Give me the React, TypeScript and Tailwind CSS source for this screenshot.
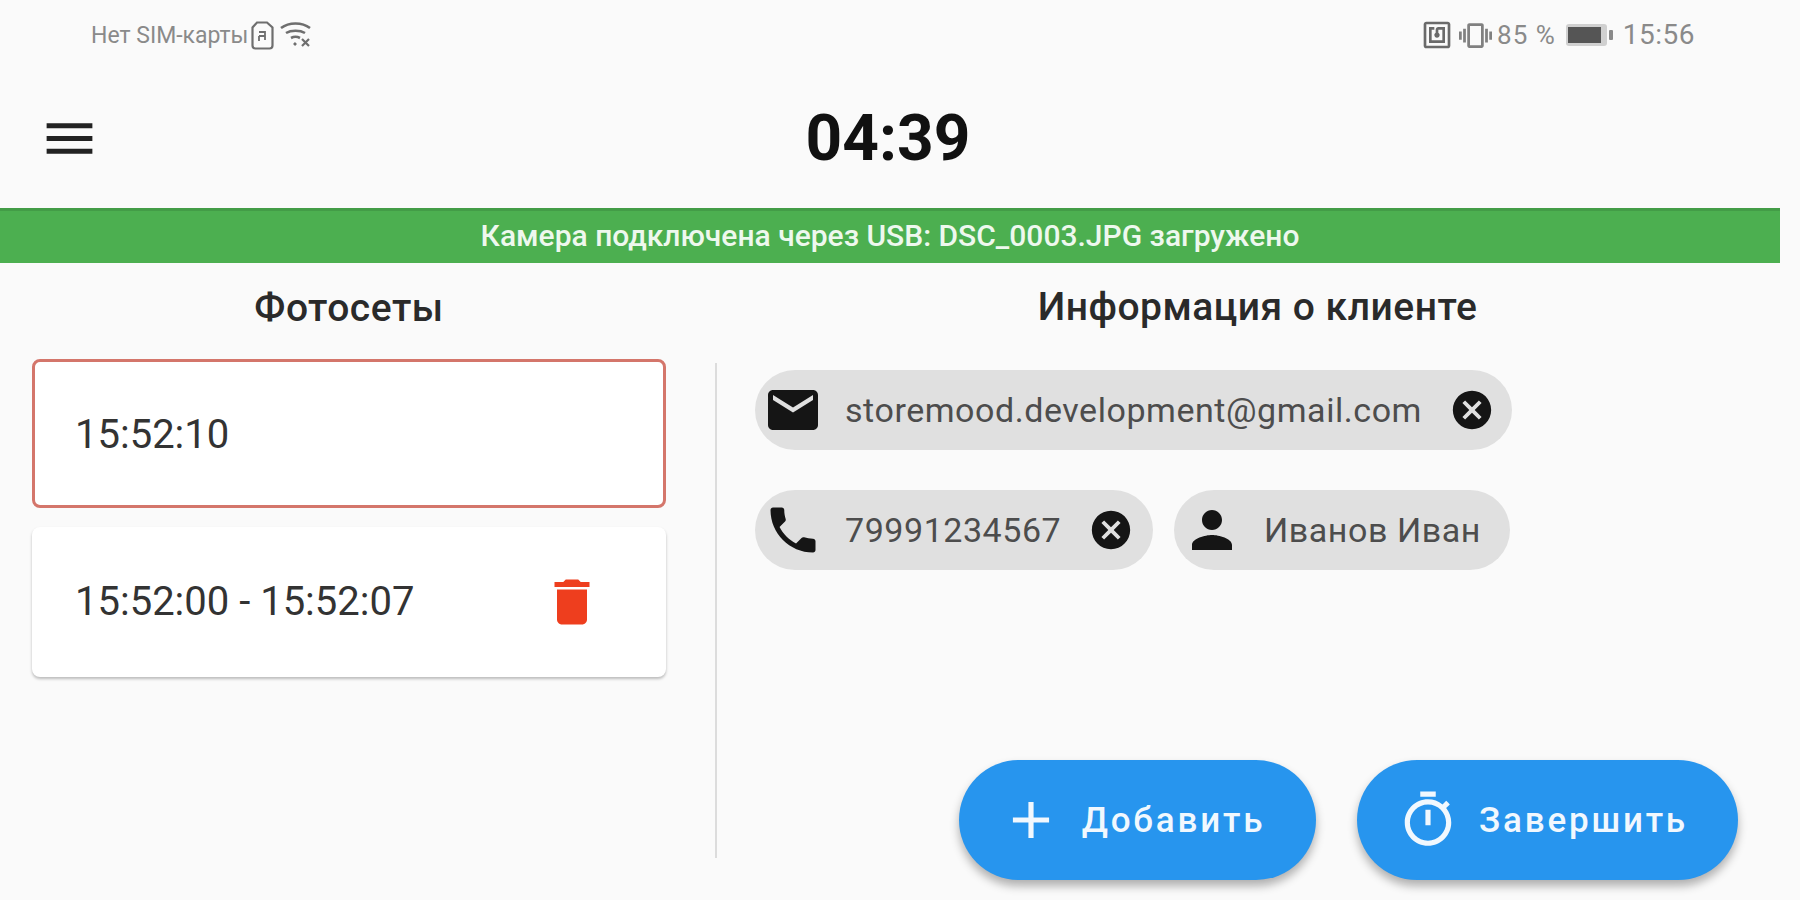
import React from "react";

const font = { fontFamily: "Roboto, 'Noto Sans', sans-serif" };

function Icon({ d, className }: { d: string; className: string }) {
  return (
    <svg viewBox="0 0 24 24" fill="currentColor" className={className}>
      <path d={d} />
    </svg>
  );
}

const icons = {
  menu: "M3 18h18v-2H3v2zm0-5h18v-2H3v2zm0-7v2h18V6H3z",
  email: "M20 4H4c-1.1 0-1.99.9-1.99 2L2 18c0 1.1.9 2 2 2h16c1.1 0 2-.9 2-2V6c0-1.1-.9-2-2-2zm0 4l-8 5-8-5V6l8 5 8-5v2z",
  phone: "M6.62 10.79c1.44 2.83 3.76 5.14 6.59 6.59l2.2-2.2c.27-.27.67-.36 1.02-.24 1.12.37 2.33.57 3.57.57.55 0 1 .45 1 1V20c0 .55-.45 1-1 1-9.39 0-17-7.61-17-17 0-.55.45-1 1-1h3.5c.55 0 1 .45 1 1 0 1.25.2 2.45.57 3.57.11.35.03.74-.25 1.02l-2.2 2.2z",
  person: "M12 12c2.21 0 4-1.79 4-4s-1.79-4-4-4-4 1.79-4 4 1.79 4 4 4zm0 2c-2.67 0-8 1.34-8 4v2h16v-2c0-2.66-5.33-4-8-4z",
  cancel: "M12 2C6.47 2 2 6.47 2 12s4.47 10 10 10 10-4.47 10-10S17.53 2 12 2zm5 13.59L15.59 17 12 13.41 8.41 17 7 15.59 10.59 12 7 8.41 8.41 7 12 10.59 15.59 7 17 8.41 13.41 12 17 15.59z",
  trash: "M6 19c0 1.1.9 2 2 2h8c1.1 0 2-.9 2-2V7H6v12zM19 4h-3.5l-1-1h-5l-1 1H5v2h14V4z",
  add: "M19 13h-6v6h-2v-6H5v-2h6V5h2v6h6v2z",
  timer: "M15 1H9v2h6V1zm-4 13h2V8h-2v6zm8.03-6.61l1.42-1.42c-.43-.51-.9-.99-1.41-1.41l-1.42 1.42C16.07 4.74 14.12 4 12 4c-4.97 0-9 4.03-9 9s4.02 9 9 9 9-4.03 9-9c0-2.12-.74-4.07-1.97-5.61zM12 20c-3.87 0-7-3.13-7-7s3.13-7 7-7 7 3.13 7 7-3.13 7-7 7z",
  nfc: "M20 2H4c-1.1 0-2 .9-2 2v16c0 1.1.9 2 2 2h16c1.1 0 2-.9 2-2V4c0-1.1-.9-2-2-2zm0 18H4V4h16v16zM18 6h-5c-1.1 0-2 .9-2 2v2.28c-.6.35-1 .98-1 1.72 0 1.1.9 2 2 2s2-.9 2-2c0-.74-.4-1.38-1-1.72V8h3v8H8V8h2V6H6v12h12V6z",
  vibrate: "M0 15h2V9H0v6zm3 2h2V7H3v10zm19-8v6h2V9h-2zm-3 8h2V7h-2v10zM16.5 3h-9C6.67 3 6 3.67 6 4.5v15c0 .83.67 1.5 1.5 1.5h9c.83 0 1.5-.67 1.5-1.5v-15c0-.83-.67-1.5-1.5-1.5zM16 19H8V5h8v14z",
};

function StatusBar() {
  return (
    <div className="h-[70px] flex items-center justify-between pl-[91px] pr-[105px] text-[#8a8a8a]">
      <div className="flex items-center">
        <span className="text-[23px] leading-none">Нет SIM-карты</span>
        <svg viewBox="0 0 23 29" fill="none" stroke="currentColor" strokeWidth="2.2" className="w-[23px] h-[29px] ml-[3px] text-[#6e6e6e]">
          <path d="M6 1.5h10l5.500 5v18a3 3 0 0 1-3 3h-14a3 3 0 0 1-3-3v-18z" />
          <path d="M8 11h6v8M8 15h6M8 15v5" strokeWidth="1.8" />
        </svg>
        <svg viewBox="0 0 31 26" fill="none" stroke="currentColor" strokeWidth="2.6" className="w-[31px] h-[26px] ml-[6px] text-[#6e6e6e]">
          <path d="M1 6c8-6 21-6 29 0" />
          <path d="M6 11c5-3 14-3 19 0" />
          <path d="M11 16c3-1.600 6-1.600 9 0" />
          <path d="M14 21l2 2" />
          <path d="M22 17l7 7M29 17l-7 7" strokeWidth="2.200" />
        </svg>
      </div>
      <div className="flex items-center">
        <Icon d={icons.nfc} className="w-[32px] h-[32px] text-[#6a6a6a]" />
        <Icon d={icons.vibrate} className="w-[33px] h-[33px] ml-[6px] text-[#808080]" />
        <span className="text-[26px] leading-none ml-[5px] tracking-[1px]">85 %</span>
        <svg viewBox="0 0 47 22" className="w-[47px] h-[22px] ml-[10px]">
          <rect x="0" y="0" width="41" height="22" rx="3" fill="#d0d0d0" />
          <rect x="2" y="3" width="33" height="16" fill="#555555" />
          <rect x="43" y="6" width="4" height="10" rx="1" fill="#8a8a8a" />
        </svg>
        <span className="text-[28px] leading-none ml-[10px] tracking-[0.5px]">15:56</span>
      </div>
    </div>
  );
}

function Chip({ icon, text, close, className }: { icon: string; text: string; close?: boolean; className?: string }) {
  return (
    <div className={`h-[80px] rounded-full bg-[#e0e0e0] flex items-center ${className ?? ""}`}>
      <Icon d={icon} className="w-[60px] h-[60px] ml-[8px] text-[#151515] shrink-0" />
      <span className="ml-[22px] text-[34px] leading-none text-[#4d4d4d] tracking-[0.55px] whitespace-nowrap">{text}</span>
      {close && <Icon d={icons.cancel} className="w-[46px] h-[46px] ml-[27px] text-[#151515] shrink-0" />}
    </div>
  );
}

function Fab({ icon, label, className }: { icon: string; label: string; className: string }) {
  return (
    <div className={`h-[120px] rounded-full bg-[#2795ee] text-[#f1f8fe] flex items-center justify-center pr-[10px] shadow-[0_6px_10px_rgba(0,0,0,0.3)] ${className}`}>
      <Icon d={icon} className="w-[62px] h-[62px] shrink-0" />
      <span className="ml-[20px] text-[35px] font-medium leading-none tracking-[2.8px]">{label}</span>
    </div>
  );
}

export default function App() {
  return (
    <div style={font} className="w-[1800px] h-[900px] bg-[#fafafa] flex flex-col overflow-hidden">
      <StatusBar />

      <div className="h-[138px] relative flex items-center justify-center pr-[24px]">
        <Icon d={icons.menu} className="absolute left-[39px] top-[38px] w-[61px] h-[61px] text-[#222222]" />
        <span className="text-[64px] font-bold leading-none text-[#111111]">04:39</span>
      </div>

      <div className="w-[1780px] h-[55px] bg-[#4caf50] border-t-[3px] border-[#439c47] flex items-center justify-center pb-[3px] text-[30px] font-medium text-[#eef8ee]">
        Камера подключена через USB: DSC_0003.JPG загружено
      </div>

      <div className="flex-1 flex">
        <div className="w-[715px] shrink-0 pl-[32px] pr-[49px]">
          <h2 className="h-[90px] mb-[6px] flex items-center justify-center text-[39px] font-medium text-[#2a2a2a] tracking-[0.5px]">Фотосеты</h2>
          <div className="h-[149px] rounded-[8px] bg-white border-[3px] border-[#d4766b] flex items-center pl-[40px] pt-[2px] text-[40px] text-[#333333]">
            15:52:10
          </div>
          <div className="mt-[19px] h-[150px] rounded-[8px] bg-white shadow-[0_2px_3px_rgba(0,0,0,0.25)] flex items-center justify-between pl-[43px] pr-[64px] text-[40px] text-[#333333]">
            <span>15:52:00 - 15:52:07</span>
            <Icon d={icons.trash} className="w-[60px] h-[60px] text-[#ee3e1e]" />
          </div>
        </div>

        <div className="w-[2px] h-[495px] mt-[100px] bg-[#dcdcdc] shrink-0" />

        <div className="flex-1 flex flex-col pl-[38px] pr-[62px] pb-[20px]">
          <h2 className="h-[107px] -ml-[38px] pl-[60px] flex items-start pt-[15px] justify-center text-[39px] font-medium text-[#2a2a2a] tracking-[0.5px]">Информация о клиенте</h2>
          <Chip icon={icons.email} text="storemood.development@gmail.com" close className="w-[757px]" />
          <div className="flex gap-[21px] mt-[40px]">
            <Chip icon={icons.phone} text="79991234567" close className="w-[398px]" />
            <Chip icon={icons.person} text="Иванов Иван" className="w-[336px]" />
          </div>
          <div className="mt-auto flex justify-end gap-[41px]">
            <Fab icon={icons.add} label="Добавить" className="w-[357px]" />
            <Fab icon={icons.timer} label="Завершить" className="w-[381px]" />
          </div>
        </div>
      </div>
    </div>
  );
}
